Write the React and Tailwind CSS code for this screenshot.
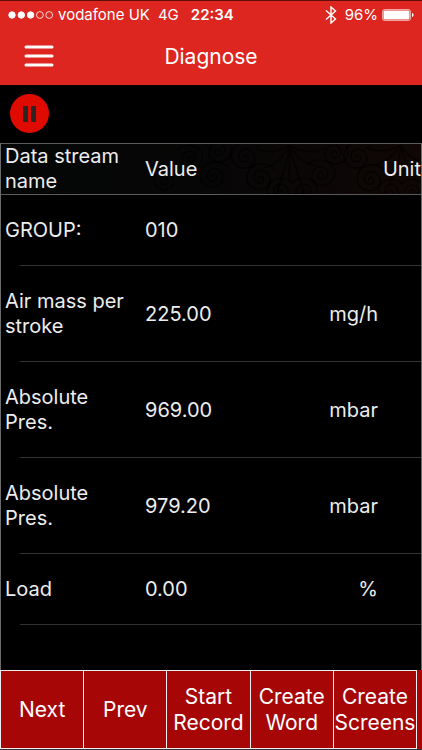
const rows = [
    { name: "GROUP:", value: "010", unit: "" },
    { name: "Air mass per stroke", value: "225.00", unit: "mg/h" },
    { name: "Absolute Pres.", value: "969.00", unit: "mbar" },
    { name: "Absolute Pres.", value: "979.20", unit: "mbar" },
    { name: "Load", value: "0.00", unit: "%" },
];

const actions = ["Next", "Prev", "Start Record", "Create Word", "Create Screens"];

// Centre, size and direction of the curls in the table header
const swirls = [
    [20, 34, 12, 1], [44, 12, 12, -1], [71, 5, 14, -1], [67, 30, 14, 1],
    [98, 11, 14, 1], [113, 32, 14, 1], [132, 45, 13, 1], [156, 45, 13, -1],
    [172, 28, 14, -1], [185, 7, 14, -1], [208, 11, 14, 1], [221, 33, 14, 1],
    [240, 45, 12, 1], [262, 45, 12, -1],
];

const StatusBar = () => (
    <div className="flex h-[29px] items-center border-t border-[#5c0f0c] px-2 text-[15px] leading-5">
        <svg className="h-3 w-[46px]" viewBox="0 0 46 12" fill="#fff" stroke="#fff">
            <circle cx="4" cy="6" r="3.2" />
            <circle cx="13.3" cy="6" r="3.2" />
            <circle cx="22.6" cy="6" r="3.2" />
            <circle cx="31.9" cy="6" r="3.4" fill="none" strokeWidth="0.8" />
            <circle cx="41.2" cy="6" r="3.4" fill="none" strokeWidth="0.8" />
        </svg>
        <span className="ml-1">vodafone UK</span>
        <span className="ml-2">4G</span>
        <span className="ml-3 font-semibold">22:34</span>
        <svg
            className="ml-auto h-[18px] w-3"
            viewBox="0 0 12 18"
            fill="none"
            stroke="#fff"
            strokeWidth="1.4"
        >
            <path d="M1 4.500l9.500 8.500L6 17V1l4.500 4L1 13.500" />
        </svg>
        <span className="ml-2">96%</span>
        <svg className="ml-1 h-3 w-8" viewBox="0 0 32 12">
            <rect x="0.5" y="0.5" width="28" height="11" rx="2" fill="none" stroke="#fff" strokeOpacity="0.6" />
            <rect x="1.5" y="1.5" width="26" height="9" rx="1" fill="#fff" />
            <path d="M30 4c2 .5 2 3.500 0 4z" fill="#fff" />
        </svg>
    </div>
);

const HeaderPattern = () => (
    <svg
        className="absolute right-0 top-0 h-full w-[270px]"
        viewBox="0 0 270 48"
        preserveAspectRatio="xMaxYMid slice"
        fill="none"
        stroke="#000"
        strokeOpacity="0.6"
        strokeWidth="1.5"
        aria-hidden="true"
    >
        {swirls.map(([x, y, r, dir]) => (
            <g key={x} transform={`translate(${x} ${y}) scale(${(dir * r) / 14} ${r / 14})`}>
                <path d="M14-8C6-16-10-15-13-4-16 8-4 15 5 10 12 5 9-6 1-7-7-7-9 2-3 5 2 7 5 1 1-1-1-2-3 0-2 2" />
            </g>
        ))}
        <path d="M141 0c0 16-8 28-12 48M141 0c2 16 10 28 14 48M141 0c-6 14-16 20-24 22M141 0c8 14 16 18 26 20M141 0c-12 8-22 8-32 4M141 0c12 8 26 8 36 2M141 0v34" />
        <path d="M250 0c0 16-6 26-12 40M250 0c2 14 10 24 16 36M250 0c-8 12-16 16-26 20M250 0c6 10 12 14 20 16M250 0c-12 7-22 7-34 3" />
    </svg>
);

const DataTable = () => (
    <table className="w-full table-fixed text-left text-[20px] leading-[25px]">
        <colgroup>
            <col className="w-[144px]" />
            <col />
            <col />
        </colgroup>
        <thead>
            <tr className="relative h-[50px] border-y border-[#5c5c5c] bg-gradient-to-r from-[#040706] via-[#070606] to-[#0f0706]">
                <th className="py-0 pl-1 pr-4 font-normal">Data stream name</th>
                <th className="font-normal">
                    <HeaderPattern />
                    <span className="relative">Value</span>
                </th>
                <th className="text-right font-normal">
                    <span className="relative">Unit</span>
                </th>
            </tr>
        </thead>
        <tbody>
            {rows.map((row, index) => (
                <tr key={index}>
                    <td className="relative py-[23px] pl-1 pr-4 after:absolute after:bottom-0 after:left-[19px] after:right-0 after:h-px after:bg-[#333]">
                        {row.name}
                    </td>
                    <td className="relative py-[23px] after:absolute after:inset-x-0 after:bottom-0 after:h-px after:bg-[#333]">
                        {row.value}
                    </td>
                    <td className="relative py-[23px] pr-[43px] text-right after:absolute after:inset-x-0 after:bottom-0 after:h-px after:bg-[#333]">
                        {row.unit}
                    </td>
                </tr>
            ))}
        </tbody>
    </table>
);

const App = () => {
    return (
        <div className="flex min-h-screen flex-col bg-black font-['Inter',sans-serif] text-[#ededed]">
            <header className="bg-[#dc261f] text-white">
                <StatusBar />
                <div className="grid h-14 grid-cols-[1fr_auto_1fr] items-center px-6">
                    <button type="button" aria-label="Menu" className="w-[30px]">
                        <svg className="block h-6 w-[30px]" viewBox="0 0 30 24" stroke="#fff" strokeWidth="3" strokeLinecap="round">
                            <path d="M2 2h26M2 11h26M2 20h26" />
                        </svg>
                    </button>
                    <h1 className="text-[21px] leading-7">Diagnose</h1>
                </div>
            </header>

            <div className="px-[10px] pb-[10px] pt-[9px]">
                <button
                    type="button"
                    aria-label="Pause"
                    className="flex size-[39px] items-center justify-center gap-[3px] rounded-full bg-[#e00b00]"
                >
                    <span className="h-4 w-[5px] bg-[#2b2523]" />
                    <span className="h-4 w-[5px] bg-[#2b2523]" />
                </button>
            </div>

            <main className="flex-1 border-x border-[#6b6b6b]">
                <DataTable />
            </main>

            <footer className="border-b border-[#333] bg-[#a60606] pr-[5px] text-white">
                <div className="flex border-y border-l border-[#eee]">
                    {actions.map((label) => (
                        <button
                            key={label}
                            type="button"
                            className="flex h-[77px] min-w-0 flex-1 items-center justify-center border-r border-[#eee] text-center text-[21px] leading-[26px]"
                        >
                            {label}
                        </button>
                    ))}
                </div>
            </footer>
        </div>
    );
};

export default App;
